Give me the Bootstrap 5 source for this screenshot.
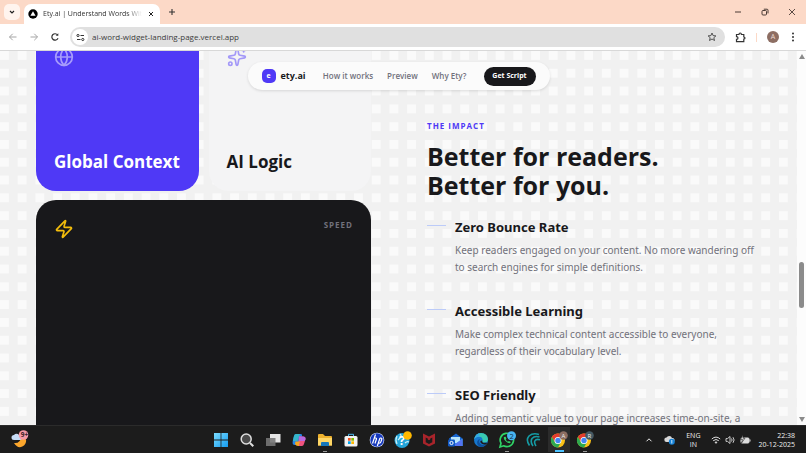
<!DOCTYPE html>
<html lang="en">
<head>
<meta charset="utf-8">
<meta name="viewport" content="width=device-width, initial-scale=1">
<title>Ety.ai | Understand Words Without Leaving</title>
<link href="https://cdn.jsdelivr.net/npm/bootstrap@5.3.0/dist/css/bootstrap.min.css" rel="stylesheet">
<style>
  body { font-family: "Open Sans", "Noto Sans", sans-serif; font-size: 8px; line-height: 12px; color: #18181b; }
  button { border: 0; background: none; padding: 0; color: inherit; line-height: inherit; }
  svg { display: block; flex: none; }

  /* window frame */
  .titlebar { height: 24px; background: #fcd9c7; padding: 0 4px; }
  .tab-search { width: 16px; height: 16px; border-radius: 5px; background: #fff4ee; }
  .page-tab { width: 136px; height: 20px; margin-left: 4px; padding: 0 6px 0 4px; background: #fff; border-radius: 7px 7px 0 0; }
  .tab-title { margin: 0 6px 0 5px; font-size: 7px; color: #333; white-space: nowrap; -webkit-mask-image: linear-gradient(to right, #000 85%, transparent); mask-image: linear-gradient(to right, #000 85%, transparent); }
  .window-buttons { gap: 19px; padding-right: 6px; color: #4a3b35; }
  .toolbar { height: 27px; padding: 0 9px 0 8px; gap: 10px; border-bottom: 1px solid #d8d8d8; background: #fff; }
  .history { gap: 11px; }
  .address { height: 20px; border-radius: 10px; background: #e0e0e0; padding: 0 8px 0 2px; }
  .address-input { border: 0; background: transparent; outline: 0; padding: 0; font-size: 8px; color: #3c3c3c; }
  .site-info { width: 16px; height: 16px; border-radius: 50%; background: #fff; }
  .avatar { width: 12px; height: 12px; border-radius: 50%; background: #8d6e63; color: #f0dcd4; font-size: 7px; }
  .divider { width: 1px; height: 9px; background: #fcd9c7; }

  /* page */
  .page-area {
    background-color: #fafafa;
    background-image: linear-gradient(to right, transparent 50%, #f1f1f1 50%), linear-gradient(to bottom, transparent 50%, #f1f1f1 50%);
    background-size: calc(100% / 45) 100%, 100% 18px;
    background-repeat: repeat, repeat round;
  }
  .site-nav { top: 11px; left: 50%; transform: translateX(-50%); width: 302px; height: 28px; border-radius: 14px; background: #fbfbfb; box-shadow: 0 1px 3px #0000001f; padding: 0 14px; }
  .brand { font-size: 9px; font-weight: 700; color: #18181b; gap: 5px; }
  .brand-mark { width: 14px; height: 14px; border-radius: 5px; background: #4f39f6; color: #fff; font-size: 7px; line-height: 13px; }
  .site-links { gap: 14px; }
  .site-link { font-size: 8px; font-weight: 600; color: #71717b; text-decoration: none; }
  .script-btn { width: 52px; height: 19px; border-radius: 10px; background: #18181b; color: #fff; font-size: 7px; font-weight: 700; }
  .features { padding: 0 35px 0 36px; gap: 56px; }
  .half { flex: 1 1 0; min-width: 0; }
  .tiles { margin-top: -23px; display: grid; grid-template-columns: 1fr 1fr; gap: 9px 10px; }
  .tile { height: 163px; border-radius: 20px; padding: 19px 18px; }
  .tile h3 { font-size: 17px; line-height: 20px; font-weight: 700; margin: 0; white-space: nowrap; }
  .tile-global { background: #4f39f6; color: #fff; }
  .tile-logic { background: #f4f4f5; }
  .tile-speed { grid-column: span 2; height: 334px; background: #18181b; }
  .speed-label { font-size: 8px; font-weight: 700; letter-spacing: 1px; color: #71717b; }
  .impact { padding-top: 69px; }
  .eyebrow { font-size: 8px; font-weight: 700; letter-spacing: 1px; color: #4f39f6; margin: 0 0 10px; }
  .impact h2 { font-size: 25px; line-height: 29px; font-weight: 700; margin: 0 0 17px; white-space: nowrap; }
  .benefit { gap: 9px; margin-bottom: 25px; font-family: "Noto Sans", "Open Sans", sans-serif; }
  .dash { flex: none; width: 19px; height: 1px; margin-top: 8px; background: #bccbf8; }
  .benefit h3 { font-size: 13px; line-height: 20px; font-weight: 700; margin: 0 0 5px; }
  .benefit p { font-size: 10px; line-height: 17px; color: #71717b; margin: 0; white-space: nowrap; }
  .scroll-track { width: 9px; background: #fcfcfc; padding: 3px 0; }
  .scroll-thumb { width: 5px; height: 46px; border-radius: 3px; background: #8b8b8b; }
  .space-above { flex: 201 1 0; }
  .space-below { flex: 108 1 0; }

  /* taskbar */
  .taskbar { height: 28px; background: #1c1c1c; border-top: 1px solid #2b2b2b; padding: 0 11px; color: #eee; font-size: 7px; line-height: 9px; }
  .apps { gap: 10px; }
  .app { position: relative; width: 16px; height: 27px; display: flex; align-items: center; justify-content: center; }
  .running::after { content: ""; position: absolute; bottom: 1px; left: 6px; width: 4px; height: 1px; background: #999; }
  .active { background: #2b2b2b; box-shadow: 0 0 0 3px #2b2b2b; clip-path: inset(1px -3px); }
  .active::after { left: 4px; width: 9px; height: 2px; background: #4cc2ff; }
  .tray { gap: 7px; }
</style>
<script src="https://cdn.jsdelivr.net/npm/bootstrap@5.3.0/dist/js/bootstrap.bundle.min.js"></script>
</head>
<body class="vh-100 d-flex flex-column overflow-hidden">

<header class="flex-shrink-0">
  <div class="titlebar d-flex align-items-center">
    <button class="tab-search d-flex align-items-center justify-content-center" aria-label="Search tabs"><svg width="6" height="6" viewBox="0 0 6 6" fill="none" stroke="#222" stroke-width="1.2"><path d="M1 2l2 2 2-2"/></svg></button>
    <div class="page-tab d-flex align-items-center align-self-end">
      <svg width="10" height="10" viewBox="0 0 10 10"><circle cx="5" cy="5" r="4.7"/><path d="M5 2.3L7.6 6.8H2.4z" fill="#fff"/></svg>
      <span class="tab-title overflow-hidden flex-grow-1">Ety.ai | Understand Words With</span>
      <button aria-label="Close tab"><svg width="6" height="6" viewBox="0 0 6 6" stroke="#222" stroke-width="1"><path d="M1 1l4 4M5 1L1 5"/></svg></button>
    </div>
    <button class="ms-2" aria-label="New tab"><svg width="8" height="8" viewBox="0 0 8 8" stroke="#333" stroke-width="1.1"><path d="M4 1v6M1 4h6"/></svg></button>
    <div class="window-buttons d-flex align-items-center ms-auto">
      <button aria-label="Minimize"><svg width="8" height="8" viewBox="0 0 8 8" stroke="currentColor"><path d="M1 4h6"/></svg></button>
      <button aria-label="Restore"><svg width="8" height="8" viewBox="0 0 8 8" fill="none" stroke="currentColor"><rect x="1" y="2.5" width="4.5" height="4.5" rx="1"/><path d="M2.8 1.2H6Q7 1.2 7 2.2V5.4"/></svg></button>
      <button aria-label="Close"><svg width="8" height="8" viewBox="0 0 8 8" stroke="currentColor" stroke-width=".9"><path d="M1 1l6 6M7 1L1 7"/></svg></button>
    </div>
  </div>
  <div class="toolbar d-flex align-items-center">
    <div class="history d-flex align-items-center">
      <button aria-label="Back"><svg width="10" height="10" viewBox="0 0 10 10" fill="none" stroke="#a5a5a5"><path d="M8.5 5h-7M4.7 1.8L1.5 5l3.2 3.2"/></svg></button>
      <button aria-label="Forward"><svg width="10" height="10" viewBox="0 0 10 10" fill="none" stroke="#a5a5a5"><path d="M1.5 5h7M5.3 1.8L8.5 5 5.3 8.2"/></svg></button>
      <button aria-label="Reload"><svg width="10" height="10" viewBox="0 0 10 10" fill="none" stroke="#333" stroke-width="1.2"><path d="M8 6.2A3.2 3.2 0 1 1 7.6 3"/><path d="M8.3 1.2v2.6H5.7z" fill="#333" stroke="none"/></svg></button>
    </div>
    <div class="address d-flex align-items-center flex-grow-1">
      <button class="site-info d-flex align-items-center justify-content-center flex-shrink-0" aria-label="Site information"><svg width="9" height="9" viewBox="0 0 9 9" fill="none" stroke="#333" stroke-width="1"><circle cx="2" cy="2.5" r="1.1"/><path d="M4.5 2.5H8M1 6.5h3.5"/><circle cx="6.8" cy="6.5" r="1.1"/></svg></button>
      <input class="address-input flex-grow-1 ms-1" aria-label="Address" value="ai-word-widget-landing-page.vercel.app">
      <button aria-label="Bookmark"><svg width="10" height="10" viewBox="0 0 10 10" fill="none" stroke="#444" stroke-width=".9"><path d="M5 1l1.1 2.6 2.8.3-2.1 1.8.7 2.8L5 7 2.5 8.5l.7-2.8L1.1 3.9l2.8-.3z"/></svg></button>
    </div>
    <button aria-label="Extensions"><svg width="11" height="11" viewBox="0 0 11 11" fill="none" stroke="#333" stroke-width="1.2"><path d="M1.5 2.5H4Q4 1 5.2 1T6.4 2.5H8.8V5Q10 5 10 6T8.8 7V9.6H1.5V7.3Q3 7.3 3 6T1.5 4.7z"/></svg></button>
    <span class="divider"></span>
    <button class="avatar d-flex align-items-center justify-content-center" aria-label="Profile">A</button>
    <button aria-label="Menu"><svg width="8" height="10" viewBox="0 0 8 10" fill="#333"><circle cx="4" cy="1.6" r="1"/><circle cx="4" cy="5" r="1"/><circle cx="4" cy="8.4" r="1"/></svg></button>
  </div>
</header>

<div class="d-flex flex-grow-1 overflow-hidden">
  <main class="page-area flex-grow-1 position-relative overflow-hidden">
    <nav class="site-nav position-absolute d-flex align-items-center justify-content-between">
      <a class="brand d-flex align-items-center text-decoration-none" href="#"><span class="brand-mark text-center">e</span>ety.ai</a>
      <div class="site-links d-flex">
        <a class="site-link" href="#how">How it works</a>
        <a class="site-link" href="#preview">Preview</a>
        <a class="site-link" href="#why">Why Ety?</a>
      </div>
      <button class="script-btn">Get Script</button>
    </nav>
    <div class="features d-flex align-items-start">
      <div class="half tiles">
        <section class="tile tile-global d-flex flex-column justify-content-between">
          <svg width="20" height="20" viewBox="0 0 24 24" fill="none" stroke="#a79cfb" stroke-width="2"><circle cx="12" cy="12" r="10"/><path d="M12 2a14.5 14.5 0 0 0 0 20 14.5 14.5 0 0 0 0-20M2 12h20"/></svg>
          <h3>Global Context</h3>
        </section>
        <section class="tile tile-logic d-flex flex-column justify-content-between">
          <svg width="20" height="20" viewBox="0 0 24 24" fill="none" stroke="#a398f8" stroke-width="2" stroke-linecap="round" stroke-linejoin="round"><path d="M11.017 2.814a1 1 0 0 1 1.966 0l1.051 5.558a2 2 0 0 0 1.594 1.594l5.558 1.051a1 1 0 0 1 0 1.966l-5.558 1.051a2 2 0 0 0-1.594 1.594l-1.051 5.558a1 1 0 0 1-1.966 0l-1.051-5.558a2 2 0 0 0-1.594-1.594l-5.558-1.051a1 1 0 0 1 0-1.966l5.558-1.051a2 2 0 0 0 1.594-1.594zM20 2v4M22 4h-4"/><circle cx="4" cy="20" r="2"/></svg>
          <h3>AI Logic</h3>
        </section>
        <section class="tile tile-speed d-flex justify-content-between align-items-start">
          <svg width="20" height="20" viewBox="0 0 24 24" fill="none" stroke="#f3bd0c" stroke-width="2" stroke-linecap="round" stroke-linejoin="round"><path d="M4 14a1 1 0 0 1-.78-1.63l9.9-10.2a.5.5 0 0 1 .86.46l-1.92 6.02A1 1 0 0 0 13 10h7a1 1 0 0 1 .78 1.63l-9.9 10.2a.5.5 0 0 1-.86-.46l1.92-6.02A1 1 0 0 0 11 14z"/></svg>
          <span class="speed-label">SPEED</span>
        </section>
      </div>
      <div class="half impact">
        <p class="eyebrow">THE IMPACT</p>
        <h2>Better for readers.<br>Better for you.</h2>
        <div class="benefit d-flex"><span class="dash"></span><div><h3>Zero Bounce Rate</h3><p>Keep readers engaged on your content. No more wandering off<br>to search engines for simple definitions.</p></div></div>
        <div class="benefit d-flex"><span class="dash"></span><div><h3>Accessible Learning</h3><p>Make complex technical content accessible to everyone,<br>regardless of their vocabulary level.</p></div></div>
        <div class="benefit d-flex"><span class="dash"></span><div><h3>SEO Friendly</h3><p>Adding semantic value to your page increases time-on-site, a</p></div></div>
      </div>
    </div>
  </main>
  <div class="scroll-track d-flex flex-column align-items-center flex-shrink-0">
    <svg width="6" height="5" viewBox="0 0 6 5" fill="#8b8b8b"><path d="M3 0l3 5H0z"/></svg>
    <span class="space-above"></span><span class="scroll-thumb flex-shrink-0"></span><span class="space-below"></span>
    <svg width="6" height="5" viewBox="0 0 6 5" fill="#8b8b8b"><path d="M3 5l3-5H0z"/></svg>
  </div>
</div>

<footer class="taskbar d-flex align-items-center flex-shrink-0">
  <div class="half">
    <button aria-label="Weather"><svg width="18" height="18" viewBox="0 0 18 18"><path d="M3 13Q9 14 11 6q5 2 4 6t-5 5-7-4z" fill="#fba62c"/><path d="M3 10a2.5 2.5 0 0 1 0-5 3 3 0 0 1 5 0 2.5 2.5 0 0 1 1 5z" fill="#c7dcf7"/><circle cx="12.5" cy="5" r="4.8" fill="#f59aa5"/><text x="9.7" y="7.4" font-size="6.5" font-weight="700" fill="#3a2228">9+</text></svg></button>
  </div>
  <div class="apps d-flex">
    <button class="app" aria-label="Start"><svg width="16" height="16" viewBox="0 0 16 16"><defs><linearGradient id="win" x2="1" y2="1"><stop stop-color="#7bdcff"/><stop offset="1" stop-color="#149bf0"/></linearGradient></defs><path d="M1 1h6.6v6.6H1zM8.4 1H15v6.6H8.4zM1 8.4h6.6V15H1zM8.4 8.4H15V15H8.4z" fill="url(#win)"/></svg></button>
    <button class="app" aria-label="Search"><svg width="16" height="16" viewBox="0 0 16 16" fill="#4a4a4a" stroke="#dedede" stroke-width="1.5"><circle cx="7.2" cy="7" r="5"/><path d="M11 11l3.3 3.3" stroke-width="2"/></svg></button>
    <button class="app" aria-label="Task view"><svg width="16" height="16" viewBox="0 0 16 16"><path d="M5 2h10.5v8.500H5z" fill="#e5e5e5"/><path d="M1 6h9.500v8H1z" fill="#777" fill-opacity=".9"/></svg></button>
    <button class="app" aria-label="Copilot"><svg width="16" height="16" viewBox="0 0 16 16"><path d="M5 2h5q1.300 0 1 1.500L9 11q-.6 2-2 2H4Q1 13 1.700 9.500L3 4q.5-2 2-2z" fill="#2586e8"/><path d="M5 2h4L6.500 9H1.800L3 4q.5-2 2-2z" fill="#35b5c9"/><path d="M8 4.500h4q3 0 2.400 3L13 12q-.6 2-2 2H7z" fill="#ef537f"/><path d="M8 4.500h4q3 0 2.400 3L13.800 9H8.200z" fill="#b769de"/><path d="M4.500 9.500H9L7.800 14Q5 14.500 4 12z" fill="#f5a623"/></svg></button>
    <button class="app running" aria-label="File Explorer"><svg width="16" height="16" viewBox="0 0 16 16"><path d="M1 3q0-1 1-1h4l2 2h6q1 0 1 1v8.500H1z" fill="#eeb22e"/><path d="M1 6h14v7.500H1z" fill="#ffd766"/><path d="M4 14v-3q0-1 1-1h6q1 0 1 1v3z" fill="#1777ba"/></svg></button>
    <button class="app" aria-label="Microsoft Store"><svg width="16" height="16" viewBox="0 0 16 16"><path d="M5.500 4.500V2.300h5v2.200" fill="none" stroke="#4db9ed"/><rect x="1.500" y="4" width="13" height="10.500" rx="1.500" fill="#f2f2f2"/><path d="M5 6h2.700v2.700H5z" fill="#f25022"/><path d="M8.300 6H11v2.700H8.300z" fill="#7fba00"/><path d="M5 9.300h2.700V12H5z" fill="#00a4ef"/><path d="M8.300 9.300H11V12H8.300z" fill="#ffb900"/></svg></button>
    <button class="app" aria-label="HP"><svg width="16" height="16" viewBox="0 0 16 16"><circle cx="8" cy="8" r="7.300" fill="#d8e4ff"/><circle cx="8" cy="8" r="6.700" fill="#1638bd"/><path d="M6.500 2.500L3.500 11.500M5.400 6h1.200q1.200 0 .8 1.200L6 11.500M11 6L8.300 14M11 6h.8q1.400 0 .9 1.500l-.8 2.400q-.4 1.300-1.700 1.300h-.9" fill="none" stroke="#fff" stroke-width="1.200"/></svg></button>
    <button class="app" aria-label="Help"><svg width="18" height="18" viewBox="0 0 18 18"><circle cx="8" cy="9.500" r="7.500" fill="#23a4d9"/><path d="M3 5q-2 4 0 8M6 3q1.500 1 1 3L4 9M11 12q2-2 4-1" stroke="#c8eef8" stroke-width="1.300" fill="none"/><text x="5" y="14" font-size="12" font-weight="700" fill="#fff">?</text><circle cx="13.500" cy="4.500" r="4.300" fill="#ffb900"/></svg></button>
    <button class="app" aria-label="McAfee"><svg width="16" height="16" viewBox="0 0 16 16"><path d="M2 1.500l6 3 6-3v10l-6 3-6-3z" fill="#a9242b"/><path d="M4.700 5.500L8 7.300l3.300-1.800v4.700L8 12l-3.300-1.800z" fill="#1c1c1c"/><path d="M6.800 6.500h2.400v1L8 8.200 6.800 7.500z" fill="#a9242b"/></svg></button>
    <button class="app" aria-label="Outlook"><svg width="16" height="16" viewBox="0 0 16 16"><path d="M2 6.500L9 1.500l6.500 5V14H4z" fill="#1765cf"/><path d="M4 5h9v6H4z" fill="#b8e4fb"/><path d="M3 7.500l6 4 6.500-5V14H3z" fill="#35a3f2"/><path d="M15.500 7v7H5z" fill="#5472f0"/><rect x="1" y="7.500" width="7" height="7" rx="1.200" fill="#1158c4"/><circle cx="4.500" cy="11" r="1.600" fill="none" stroke="#fff"/></svg></button>
    <button class="app" aria-label="Edge"><svg width="16" height="16" viewBox="0 0 16 16"><circle cx="8" cy="8" r="7" fill="#1677cd"/><path d="M1.200 7Q2.500 1 8 1q6.500.3 7 6 0 3.500-3.500 3.500-2.500 0-2-2 .5-3.800-3.500-3.800Q3 4.600 1.200 7z" fill="#39c9b1"/><path d="M1.200 7Q2.800 1 8 1q-3 .8-1 3.800Q3 4.600 1.200 7z" fill="#35a8e6"/><path d="M7 7q-2 3 .5 5t6-.5Q11 15.500 7.500 15 3.500 13 4.200 9.500 5 7 7 7z" fill="#0e4f9c"/><path d="M9.300 8.500q-.7 2.300 2.200 2.300h2.700l-.9 1.500q-4 1-5.800-1.700-.8-2 1.800-2.100z" fill="#1c1c1c"/></svg></button>
    <button class="app running" aria-label="WhatsApp"><svg width="18" height="18" viewBox="0 0 18 18"><path d="M2 16l1-3.800a6.700 6.700 0 1 1 2.600 2.600z" fill="none" stroke="#2fd366" stroke-width="1.700"/><path d="M6 6q-.8 1.700 1.500 4T12 12.200l.8-1.200-2-1.100-.8.800q-1.700-.8-2.300-2.200l.7-.8-.8-2z" fill="#2fd366"/><circle cx="13.500" cy="4.800" r="4.500" fill="#48b5f2"/><text x="11.500" y="7.500" font-size="7.500" fill="#12304a">2</text></svg></button>
    <button class="app" aria-label="Signal"><svg width="16" height="16" viewBox="0 0 16 16" fill="none" stroke="#159ca5" stroke-width="1.600"><path d="M14 2.500Q8 .5 4 4 .5 8 4.500 13.500M14.500 5Q9.500 3.500 7 6.500q-2 3.500 1 7.500M15 7.700q-4-1-5.200 1.300-.8 2.300 1.200 5"/></svg></button>
    <button class="app running active" aria-label="Chrome, profile A"><svg width="18" height="18" viewBox="0 0 18 18"><circle cx="8" cy="9.500" r="7" fill="#fbc116"/><path d="M1.900 6A7 7 0 0 1 14.100 6H8L5 11.300z" fill="#e33b2e"/><path d="M1.900 6A7 7 0 0 0 8 16.500l3-5.300H5z" fill="#2da94f"/><circle cx="8" cy="9.500" r="3.500" fill="#fff"/><circle cx="8" cy="9.500" r="2.700" fill="#4285f4"/><circle cx="13.500" cy="4.500" r="4.300" fill="#8d6e63"/><text x="11.500" y="6.800" font-size="6" fill="#eee">A</text></svg></button>
    <button class="app running" aria-label="Chrome, profile R"><svg width="18" height="18" viewBox="0 0 18 18"><circle cx="8" cy="9.500" r="7" fill="#fbc116"/><path d="M1.900 6A7 7 0 0 1 14.100 6H8L5 11.300z" fill="#e33b2e"/><path d="M1.900 6A7 7 0 0 0 8 16.500l3-5.300H5z" fill="#2da94f"/><circle cx="8" cy="9.500" r="3.500" fill="#fff"/><circle cx="8" cy="9.500" r="2.700" fill="#4285f4"/><circle cx="13.500" cy="4.500" r="4.300" fill="#455a64"/><text x="11.500" y="6.800" font-size="6" fill="#eee">R</text></svg></button>
  </div>
  <div class="tray half d-flex align-items-center justify-content-end">
    <button class="me-1" aria-label="Hidden icons"><svg width="8" height="8" viewBox="0 0 8 8" fill="none" stroke="#eee"><path d="M1.500 5.300L4 2.800l2.500 2.500"/></svg></button>
    <button class="me-1" aria-label="OneDrive"><svg width="11" height="10" viewBox="0 0 11 10"><path d="M2.500 7a2.200 2.200 0 0 1 0-4.400A3 3 0 0 1 8 3a2 2 0 0 1 1 4z" fill="#d8d8d8"/><circle cx="7.800" cy="6.800" r="3" fill="#1683d8"/><path d="M7.800 5v3.500" stroke="#fff" stroke-width=".8"/></svg></button>
    <button class="text-center me-1" aria-label="Input language">ENG<br>IN</button>
    <button class="d-flex align-items-center gap-1" aria-label="Network, volume and battery">
      <svg width="10" height="10" viewBox="0 0 10 10" fill="none" stroke="#ddd"><path d="M.8 4Q5 .2 9.200 4M2.200 5.700q2.800-2.400 5.600 0"/><circle cx="5" cy="7.500" r=".7" fill="#ddd"/></svg>
      <svg width="11" height="10" viewBox="0 0 11 10" fill="none" stroke="#ddd" stroke-width=".9"><path d="M1 3.600h1.500L5 1.500v7L2.500 6.400H1zM6.500 3.500q1.200 1.500 0 3M8 2.200q2.200 2.800 0 5.600"/></svg>
      <svg width="11" height="10" viewBox="0 0 11 10"><rect x="1" y="3" width="8" height="5" rx="1" fill="#ddd" stroke="#ddd"/><path d="M10 4.500v2" stroke="#ddd"/><path d="M3 0L.5 4.500h2L1.500 8 5 3.200H3z" fill="#ddd" stroke="#1c1c1c" stroke-width=".6"/></svg>
    </button>
    <button class="text-end text-nowrap" aria-label="Clock">22:38<br>20-12-2025</button>
  </div>
</footer>
</body>
</html>
